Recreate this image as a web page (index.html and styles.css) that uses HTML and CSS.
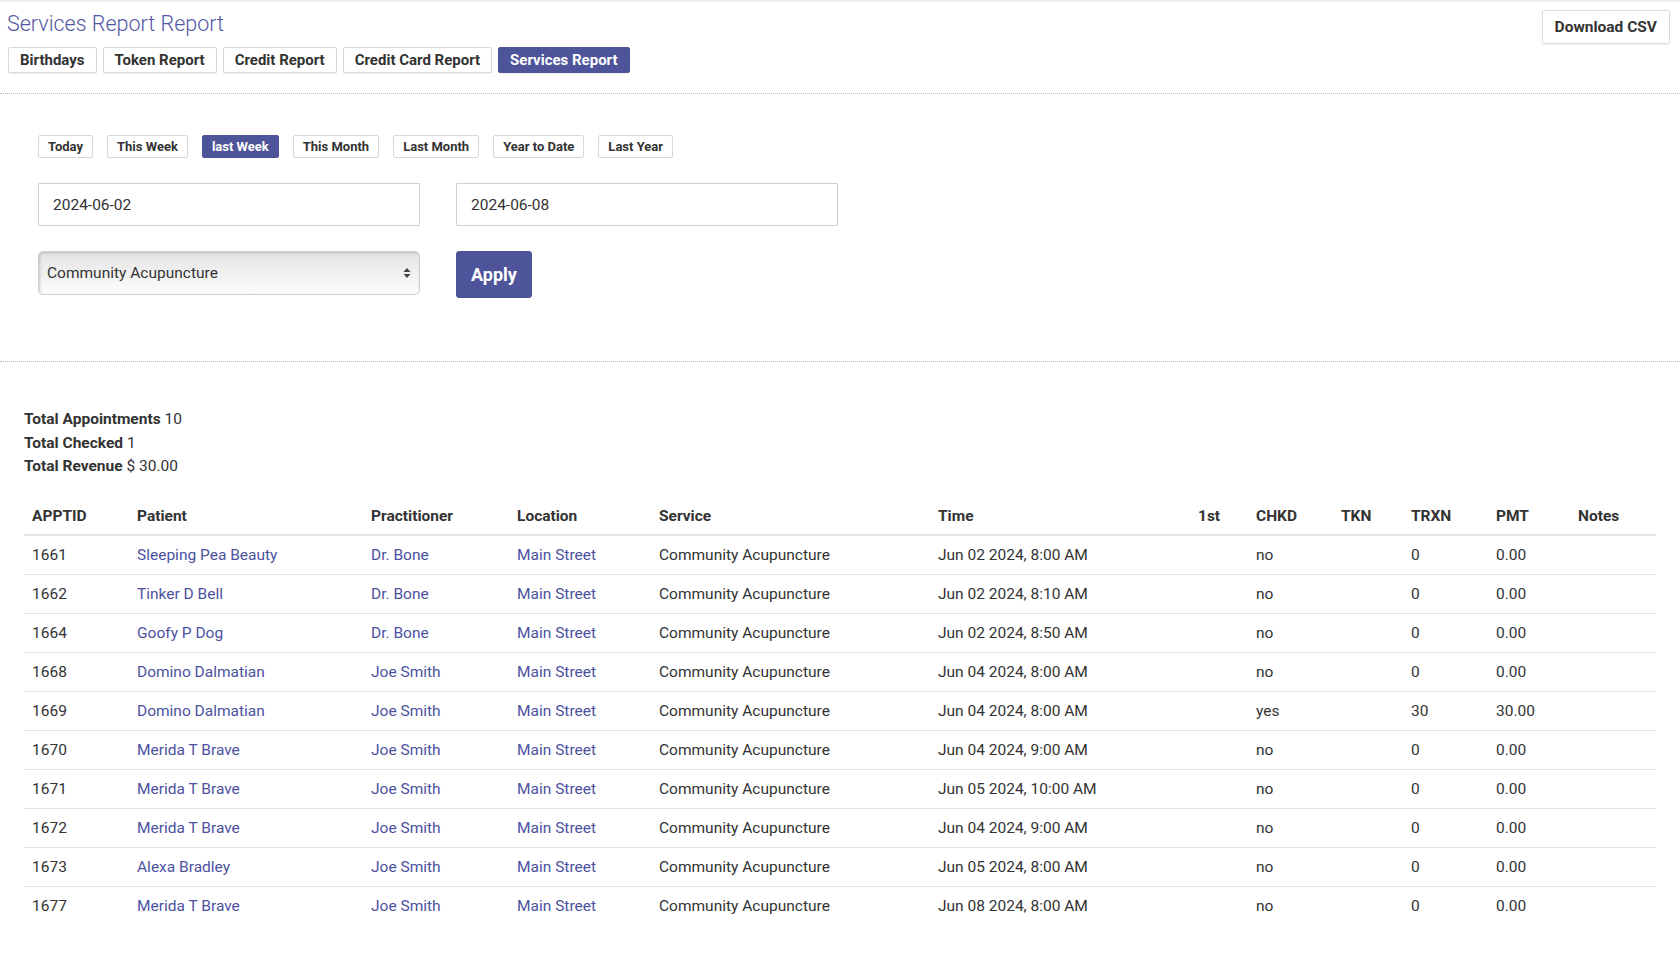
FILE: index.html
```html
<!DOCTYPE html>
<html>
<head>
<meta charset="utf-8">
<link rel="stylesheet" href="styles.css">
</head>
<body>
<div class="page">
  <header class="top">
    <div class="top-left">
      <h1 class="title">Services Report Report</h1>
      <nav class="tabs">
        <a class="tab">Birthdays</a>
        <a class="tab">Token Report</a>
        <a class="tab">Credit Report</a>
        <a class="tab">Credit Card Report</a>
        <a class="tab active">Services Report</a>
      </nav>
    </div>
    <a class="btn-csv">Download CSV</a>
  </header>

  <section class="filters">
    <div class="ranges">
      <a class="range">Today</a>
      <a class="range">This Week</a>
      <a class="range active">last Week</a>
      <a class="range">This Month</a>
      <a class="range">Last Month</a>
      <a class="range">Year to Date</a>
      <a class="range">Last Year</a>
    </div>
    <div class="row">
      <input class="field" type="text" value="2024-06-02">
      <input class="field" type="text" value="2024-06-08">
    </div>
    <div class="row row-select">
      <div class="select">
        <span>Community Acupuncture</span>
        <svg class="arrows" width="8" height="12" viewBox="0 0 8 12"><path d="M4 1 L7.5 5 H0.5 Z M4 11 L0.5 7 H7.5 Z" fill="#444"/></svg>
      </div>
      <button class="apply">Apply</button>
    </div>
  </section>

  <section class="results">
    <div class="totals">
      <div><b>Total Appointments</b> 10</div>
      <div><b>Total Checked</b> 1</div>
      <div><b>Total Revenue</b> $ 30.00</div>
    </div>
    <table class="report">
      <colgroup>
        <col style="width:105px"><col style="width:234px"><col style="width:146px"><col style="width:142px"><col style="width:279px"><col style="width:260px"><col style="width:58px"><col style="width:85px"><col style="width:70px"><col style="width:85px"><col style="width:82px"><col style="width:86px">
      </colgroup>
      <thead>
        <tr><th>APPTID</th><th>Patient</th><th>Practitioner</th><th>Location</th><th>Service</th><th>Time</th><th>1st</th><th>CHKD</th><th>TKN</th><th>TRXN</th><th>PMT</th><th>Notes</th></tr>
      </thead>
      <tbody>
        <tr><td>1661</td><td><a>Sleeping Pea Beauty</a></td><td><a>Dr. Bone</a></td><td><a>Main Street</a></td><td>Community Acupuncture</td><td>Jun 02 2024, 8:00 AM</td><td></td><td>no</td><td></td><td>0</td><td>0.00</td><td></td></tr>
        <tr><td>1662</td><td><a>Tinker D Bell</a></td><td><a>Dr. Bone</a></td><td><a>Main Street</a></td><td>Community Acupuncture</td><td>Jun 02 2024, 8:10 AM</td><td></td><td>no</td><td></td><td>0</td><td>0.00</td><td></td></tr>
        <tr><td>1664</td><td><a>Goofy P Dog</a></td><td><a>Dr. Bone</a></td><td><a>Main Street</a></td><td>Community Acupuncture</td><td>Jun 02 2024, 8:50 AM</td><td></td><td>no</td><td></td><td>0</td><td>0.00</td><td></td></tr>
        <tr><td>1668</td><td><a>Domino Dalmatian</a></td><td><a>Joe Smith</a></td><td><a>Main Street</a></td><td>Community Acupuncture</td><td>Jun 04 2024, 8:00 AM</td><td></td><td>no</td><td></td><td>0</td><td>0.00</td><td></td></tr>
        <tr><td>1669</td><td><a>Domino Dalmatian</a></td><td><a>Joe Smith</a></td><td><a>Main Street</a></td><td>Community Acupuncture</td><td>Jun 04 2024, 8:00 AM</td><td></td><td>yes</td><td></td><td>30</td><td>30.00</td><td></td></tr>
        <tr><td>1670</td><td><a>Merida T Brave</a></td><td><a>Joe Smith</a></td><td><a>Main Street</a></td><td>Community Acupuncture</td><td>Jun 04 2024, 9:00 AM</td><td></td><td>no</td><td></td><td>0</td><td>0.00</td><td></td></tr>
        <tr><td>1671</td><td><a>Merida T Brave</a></td><td><a>Joe Smith</a></td><td><a>Main Street</a></td><td>Community Acupuncture</td><td>Jun 05 2024, 10:00 AM</td><td></td><td>no</td><td></td><td>0</td><td>0.00</td><td></td></tr>
        <tr><td>1672</td><td><a>Merida T Brave</a></td><td><a>Joe Smith</a></td><td><a>Main Street</a></td><td>Community Acupuncture</td><td>Jun 04 2024, 9:00 AM</td><td></td><td>no</td><td></td><td>0</td><td>0.00</td><td></td></tr>
        <tr><td>1673</td><td><a>Alexa Bradley</a></td><td><a>Joe Smith</a></td><td><a>Main Street</a></td><td>Community Acupuncture</td><td>Jun 05 2024, 8:00 AM</td><td></td><td>no</td><td></td><td>0</td><td>0.00</td><td></td></tr>
        <tr><td>1677</td><td><a>Merida T Brave</a></td><td><a>Joe Smith</a></td><td><a>Main Street</a></td><td>Community Acupuncture</td><td>Jun 08 2024, 8:00 AM</td><td></td><td>no</td><td></td><td>0</td><td>0.00</td><td></td></tr>
      </tbody>
    </table>
  </section>
</div>
</body>
</html>
```

FILE: styles.css
```css
* { box-sizing: border-box; }
html, body { margin: 0; padding: 0; background: #fff; }
body {
  font-family: Roboto, "Liberation Sans", sans-serif;
  color: #333;
  font-size: 15.5px;
}
.page { border-top: 2px solid #eeeeee; }

.top {
  display: flex;
  justify-content: space-between;
  align-items: flex-start;
  padding: 8px 10px 20px 7px;
  border-bottom: 1px dotted #b8b8b8;
}
.title {
  margin: 0;
  font-size: 21.5px;
  font-weight: 300;
  line-height: 27px;
  color: #5257a3;
}
.tabs { display: flex; gap: 6px; margin-top: 10px; padding-left: 1px; }
.tab {
  display: inline-block;
  height: 26px;
  line-height: 24px;
  padding: 0 11px;
  border: 1px solid #d8d8d8;
  border-radius: 2px;
  background: #fff;
  font-weight: 700;
  font-size: 15px;
  color: #333;
  box-shadow: 0 1px 1px rgba(0,0,0,0.06);
}
.tab.active { background: #4e5499; border-color: #4e5499; color: #fff; }

.btn-csv {
  display: inline-block;
  margin-top: 0;
  height: 34px;
  line-height: 32px;
  padding: 0 12px;
  border: 1px solid #dcdcdc;
  border-radius: 2px;
  font-weight: 700;
  font-size: 15.5px;
  color: #333;
  box-shadow: 0 1px 2px rgba(0,0,0,0.08);
}

.filters {
  padding: 41px 0 63px 38px;
  border-bottom: 1px dotted #b8b8b8;
}
.ranges { display: flex; gap: 14px; }
.range {
  display: inline-block;
  height: 23px;
  line-height: 21px;
  padding: 0 9px;
  border: 1px solid #d8d8d8;
  border-radius: 2px;
  font-weight: 700;
  font-size: 13px;
  color: #333;
  background: #fff;
}
.range.active { background: #4e5499; border-color: #4e5499; color: #fff; }

.row { display: flex; gap: 36px; margin-top: 25px; align-items: flex-start; }
.row-select { margin-top: 25px; }
.field {
  width: 382px;
  height: 43px;
  border: 1px solid #cfcfcf;
  border-radius: 1px;
  padding: 0 14px;
  font-family: Roboto, "Liberation Sans", sans-serif;
  font-size: 15.5px;
  color: #333;
  outline: none;
}
.select {
  width: 382px;
  height: 44px;
  display: flex;
  align-items: center;
  justify-content: space-between;
  padding: 0 8px 0 8px;
  border: 1px solid #cfcfcf;
  border-radius: 5px;
  background: linear-gradient(#e4e4e4, #fdfdfd);
  box-shadow: inset 1px 1px 3px rgba(0,0,0,0.18);
  font-size: 15.5px;
  color: #333;
}
.apply {
  width: 76px;
  height: 47px;
  border: 1px solid #4a5096;
  border-radius: 3px;
  background: #4e5499;
  color: #fff;
  font-family: Roboto, "Liberation Sans", sans-serif;
  font-size: 18px;
  font-weight: 700;
}

.results { padding: 46px 24px 40px 24px; }
.totals { line-height: 23.5px; font-size: 15.5px; }
.totals b { font-weight: 700; }

.report {
  margin-top: 19px;
  width: 1632px;
  border-collapse: collapse;
  table-layout: fixed;
  font-size: 15.5px;
}
.report th {
  text-align: left;
  font-weight: 700;
  padding: 8px 8px 8px;
  border-bottom: 2px solid #e3e4ea;
  line-height: 20px;
}
.report td {
  padding: 9px 8px 9px;
  line-height: 20px;
  border-bottom: 1px solid #e3e4ea;
  white-space: nowrap;
}
.report tbody tr:last-child td { border-bottom: none; }
.report a { color: #4c52a0; text-decoration: none; }
```
